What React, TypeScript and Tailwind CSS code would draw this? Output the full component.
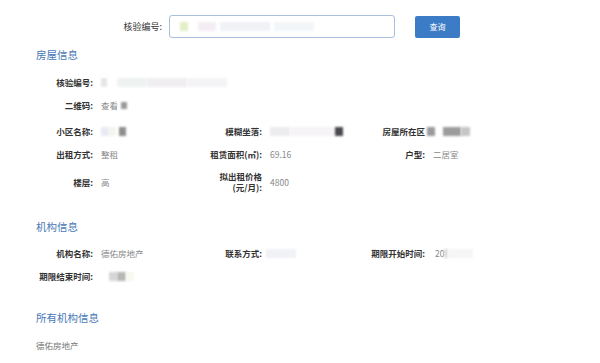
import React from 'react';

const font = { fontFamily: '"Noto Sans CJK SC", "Noto Sans", sans-serif' };

// Blurred placeholder block for masked values.
const Blur = ({ w, c, className = '' }: { w: number; c: string; className?: string }) => (
	<span
		className={`inline-block h-[9px] blur-[1px] ${className}`}
		style={{ width: w, background: c }}
	/>
);

const Label = ({ children, w = 93 }: { children: React.ReactNode; w?: number }) => (
	<div className="shrink-0 text-right text-[8.5px] font-bold leading-[11px] text-[#333]" style={{ width: w }}>
		{children}
	</div>
);

const Value = ({ children }: { children: React.ReactNode }) => (
	<div className="ml-[8px] flex items-center gap-0 text-[8.5px] text-[#888]">{children}</div>
);

const Cell = ({ label, children, w }: { label: React.ReactNode; children?: React.ReactNode; w?: number }) => (
	<div className="flex items-center">
		<Label w={w}>{label}</Label>
		<Value>{children}</Value>
	</div>
);

const SectionTitle = ({ children, className = '' }: { children: React.ReactNode; className?: string }) => (
	<div className={`pl-[36px] text-[10.5px] leading-[14px] text-[#4a78b5] ${className}`}>{children}</div>
);

export default function App() {
	return (
		<div className="h-[363px] w-[600px] overflow-hidden bg-white" style={font}>
			{/* Search bar. */}
			<div className="flex h-[38px] items-end pb-0">
				<div className="flex w-full items-center pt-[15px]">
					<div className="w-[162px] text-right text-[9px] text-[#333]">核验编号:</div>
					<div className="ml-[7px] flex h-[23px] w-[226px] items-center rounded-[3px] border border-[#a9bfdc] pl-[10px]">
						<Blur w={8} c="#e4efc8" />
						<Blur w={18} c="#f4eef4" className="ml-[10px]" />
						<Blur w={50} c="#f0f2f6" className="ml-[4px]" />
						<Blur w={40} c="#f3f6f8" className="ml-[4px]" />
					</div>
					<button className="ml-[20px] h-[22px] w-[45px] rounded-[2px] bg-[#3c7cc6] text-[8px] text-white">查询</button>
				</div>
			</div>

			<SectionTitle className="mt-[10px]">房屋信息</SectionTitle>

			<div className="mt-[9px]">
				<div className="flex h-[22px] items-center">
					<Cell label="核验编号:">
						<Blur w={6} c="#e6e6e6" />
						<Blur w={30} c="#eef3f2" className="ml-[10px]" />
						<Blur w={40} c="#f1eef1" />
						<Blur w={40} c="#f4f4f6" />
					</Cell>
				</div>
				<div className="flex h-[25px] items-center">
					<Cell label="二维码:">
						<span>查看</span>
						<Blur w={6} c="#9a9a9a" className="ml-[3px] !h-[7px]" />
					</Cell>
				</div>
				<div className="grid h-[27px] grid-cols-[170px_162px_1fr] items-center">
					<Cell label="小区名称:">
						<Blur w={8} c="#e8eaf2" />
						<Blur w={7} c="#f4f4ee" />
						<Blur w={7} c="#8f8f8f" className="ml-[3px]" />
					</Cell>
					<Cell label="模糊坐落:" w={92}>
						<Blur w={20} c="#ececee" />
						<Blur w={45} c="#f6f4f6" />
						<Blur w={8} c="#4a4a4e" />
					</Cell>
					<Cell label="房屋所在区" w={93}>
						<Blur w={8} c="#9a9a9a" className="-ml-[6px] mr-[8px]" />
						<Blur w={18} c="#9c9c9c" />
						<Blur w={9} c="#c6c6c6" />
					</Cell>
				</div>
				<div className="grid h-[18px] grid-cols-[170px_162px_1fr] items-center">
					<Cell label="出租方式:">整租</Cell>
					<Cell label="租赁面积(㎡):" w={92}>69.16</Cell>
					<Cell label="户型:" w={93}>二居室</Cell>
				</div>
				<div className="mt-[5px] grid h-[28px] grid-cols-[170px_162px_1fr] items-center">
					<Cell label="楼层:">高</Cell>
					<Cell
						label={
							<>
								<div>拟出租价格</div>
								<div>(元/月):</div>
							</>
						}
						w={92}
					>
						4800
					</Cell>
				</div>
			</div>

			<SectionTitle className="mt-[24px]">机构信息</SectionTitle>

			<div className="mt-[8px]">
				<div className="grid h-[22px] grid-cols-[170px_162px_1fr] items-center">
					<Cell label="机构名称:">德佑房地产</Cell>
					<Cell label="联系方式:" w={92}>
						<Blur w={30} c="#f0f2f6" className="-ml-[4px]" />
					</Cell>
					<Cell label="期限开始时间:" w={93}>
						<span className="ml-[2px]">20</span>
						<Blur w={4} c="#dcdcdc" />
						<Blur w={25} c="#f6f6f6" />
					</Cell>
				</div>
				<div className="flex h-[24px] items-center">
					<Cell label="期限结束时间:">
						<Blur w={8} c="#d6d6d6" className="ml-[8px]" />
						<Blur w={9} c="#b8b8b8" />
						<Blur w={8} c="#f8f8f0" />
					</Cell>
				</div>
			</div>

			<SectionTitle className="mt-[23px]">所有机构信息</SectionTitle>

			<div className="mt-[14px] pl-[36px] text-[8.5px] text-[#777]">德佑房地产</div>
		</div>
	);
}
